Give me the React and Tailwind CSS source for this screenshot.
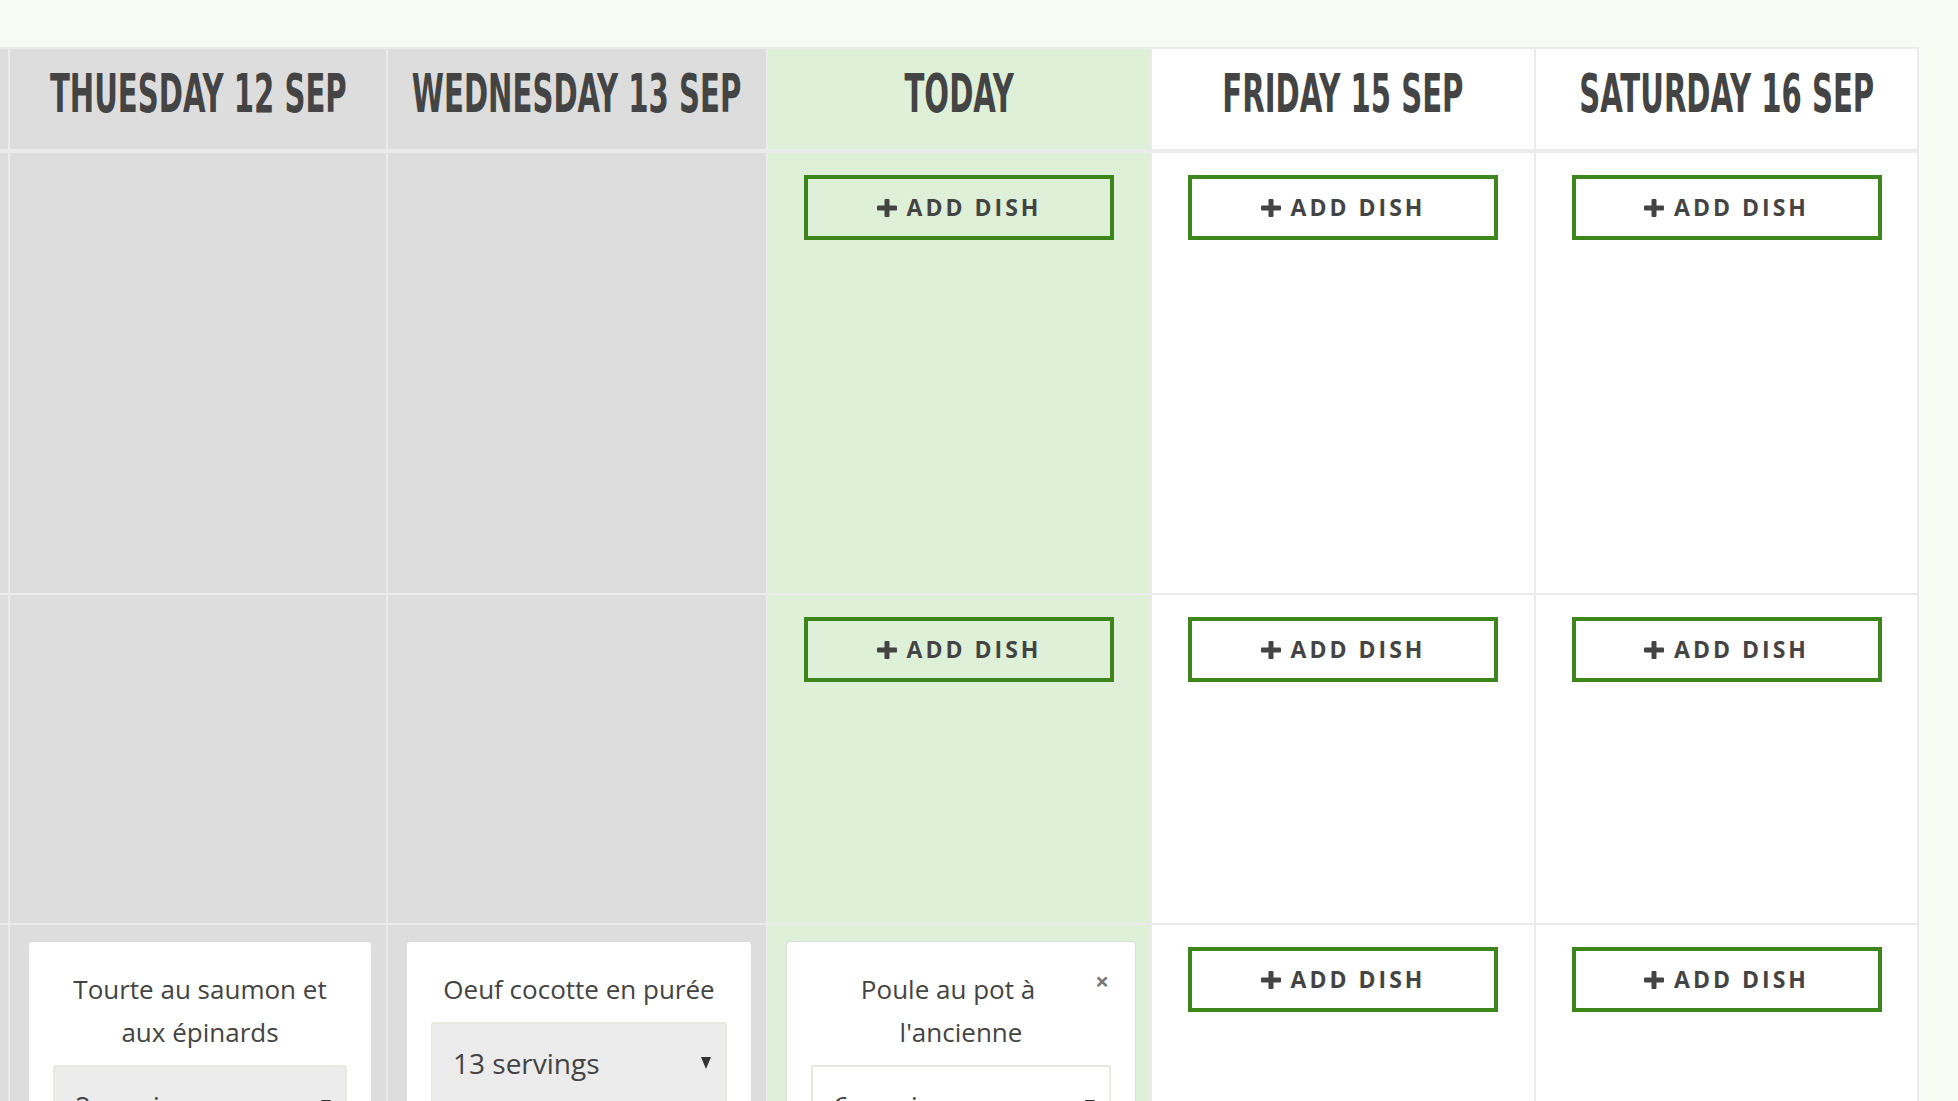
import React from 'react';

const days = [
	{ key: 'mon', label: 'MONDAY 11 SEP', width: 'w-[8px]', state: 'past' },
	{ key: 'thu', label: 'THUESDAY 12 SEP', width: 'w-[376px]', state: 'past' },
	{ key: 'wed', label: 'WEDNESDAY 13 SEP', width: 'w-[378px]', state: 'past' },
	{ key: 'today', label: 'TODAY', width: 'w-[382px]', state: 'today' },
	{ key: 'fri', label: 'FRIDAY 15 SEP', width: 'w-[382px]', state: 'future' },
	{ key: 'sat', label: 'SATURDAY 16 SEP', width: 'w-[381px]', state: 'future' },
];

const cellBg = {
	past: 'bg-[#dddddd]',
	today: 'bg-[#dff0d8]',
	future: 'bg-white',
};

// last row: dishes already planned
const dishes = {
	thu: { name: 'Tourte au saumon et aux épinards', servings: 2 },
	wed: { name: 'Oeuf cocotte en purée', servings: 13 },
	today: { name: "Poule au pot à l'ancienne", servings: 6, removable: true },
};

const PlusIcon = () => (
	<svg width="20" height="18" viewBox="0 0 20 18" className="shrink-0">
		<rect x="7.5" y="0" width="5" height="18" rx="1" fill="#444444" />
		<rect x="0" y="6.5" width="20" height="5" rx="1" fill="#444444" />
	</svg>
);

const AddDishButton = () => (
	<button className="mx-auto mt-[22px] flex h-[65px] w-[310px] items-center justify-center gap-[10px] border-4 border-[#3d861b] bg-transparent font-['Open_Sans',sans-serif] text-[23px] font-bold tracking-[3px] text-[#444444]">
		<PlusIcon />
		<span>ADD DISH</span>
	</button>
);

const DishCard = ({ dish, state }) => (
	<div className="ml-[18px] mr-[14px] mt-[16px] rounded-[4px] border border-[#dcdcdc] bg-white px-[24px] pt-[26px] pb-[20px] font-['Open_Sans',sans-serif] text-[#444444]">
		<div className="text-center text-[26px] leading-[43px]">
			{dish.removable && (
				<span className="float-right mr-[2px] w-[24px] text-right text-[24px] font-bold leading-[26px] text-[#777777]">×</span>
			)}
			{dish.name}
		</div>
		<div
			className={
				state === 'today'
					? 'mt-[11px] flex h-[82px] items-center justify-between rounded-[3px] border-2 border-[#e7eadf] bg-white pl-[20px] pr-[14px]'
					: 'mt-[11px] flex h-[82px] items-center justify-between rounded-[3px] border-2 border-[#e7eadf] bg-[#ececec] pl-[20px] pr-[14px]'
			}
		>
			<span className="text-[28px]">{dish.servings} servings</span>
			<svg width="10" height="12" viewBox="0 0 10 12">
				<polygon points="0,0 10,0 5,12" fill="#333333" />
			</svg>
		</div>
	</div>
);

export default function App() {
	return (
		<div className="h-[1101px] w-full overflow-hidden bg-[#f8fbf1]">
			<div className="pt-[47px]">
				<div className="flex w-[1919px] flex-col bg-[#ebebeb] pt-[2px] pr-[2px]">
					{/* Header */}
					<div className="flex h-[100px] gap-[2px]">
						{days.map((day) => (
							<div key={day.key} className={`${day.width} ${cellBg[day.state]} flex shrink-0 justify-center overflow-hidden pt-[18px]`}>
								{day.key !== 'mon' && (
									<span className="block h-[54px] shrink-0 scale-x-[0.6] whitespace-nowrap font-['DejaVu_Sans_Condensed','DejaVu_Sans',sans-serif] text-[54px] font-bold leading-none text-[#444444]">
										{day.label}
									</span>
								)}
							</div>
						))}
					</div>

					{/* Breakfast / lunch rows */}
					<div className="mt-[4px] flex h-[440px] gap-[2px]">
						{days.map((day) => (
							<div key={day.key} className={`${day.width} ${cellBg[day.state]} shrink-0`}>
								{day.state !== 'past' && <AddDishButton />}
							</div>
						))}
					</div>
					<div className="mt-[2px] flex h-[328px] gap-[2px]">
						{days.map((day) => (
							<div key={day.key} className={`${day.width} ${cellBg[day.state]} shrink-0`}>
								{day.state !== 'past' && <AddDishButton />}
							</div>
						))}
					</div>

					{/* Dinner row */}
					<div className="mt-[2px] flex h-[400px] gap-[2px]">
						{days.map((day) => (
							<div key={day.key} className={`${day.width} ${cellBg[day.state]} shrink-0 overflow-hidden`}>
								{dishes[day.key] ? (
									<DishCard dish={dishes[day.key]} state={day.state} />
								) : (
									day.state === 'future' && <AddDishButton />
								)}
							</div>
						))}
					</div>
				</div>
			</div>
		</div>
	);
}
